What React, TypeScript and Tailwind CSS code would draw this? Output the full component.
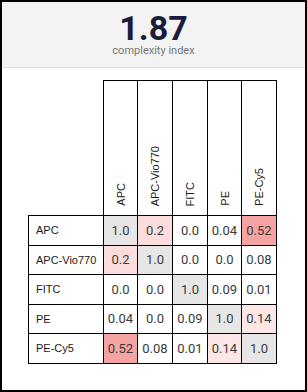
const channels = ["APC", "APC-Vio770", "FITC", "PE", "PE-Cy5"]

const matrix = [
  ["1.0", "0.2", "0.0", "0.04", "0.52"],
  ["0.2", "1.0", "0.0", "0.0", "0.08"],
  ["0.0", "0.0", "1.0", "0.09", "0.01"],
  ["0.04", "0.0", "0.09", "1.0", "0.14"],
  ["0.52", "0.08", "0.01", "0.14", "1.0"],
]

const colWidths = ["w-[34px]", "w-[35px]", "w-[35px]", "w-[34px]", "w-[35px]"]

function cellBg(value: string, diagonal: boolean) {
  if (diagonal) return "bg-[#e6e6e6]"
  const v = parseFloat(value)
  if (v >= 0.5) return "bg-[#f6a3a3]"
  if (v >= 0.2) return "bg-[#fcdcdc]"
  if (v >= 0.1) return "bg-[#fde6e6]"
  return "bg-white"
}

export default function App() {
  return (
    <div className="w-[307px] h-[392px] border-2 border-black bg-white flex flex-col">
      <div className="h-[66px] shrink-0 bg-[#f3f3f3] border-b border-[#dddddd] flex flex-col items-center pt-[12px] font-['Roboto',sans-serif]">
        <div className="text-[34px] leading-[28px] font-bold text-[#1d1b3b]">1.87</div>
        <div className="mt-[3px] text-[11px] leading-[12px] text-[#777777]">complexity index</div>
      </div>
      <div className="pt-[12px] pl-[26px]">
        <table className="table-fixed border-collapse w-[249px]">
          <colgroup>
            <col className="w-[75px]" />
            {colWidths.map((w, i) => (
              <col key={i} className={w} />
            ))}
          </colgroup>
          <thead>
            <tr>
              <th className="p-0"></th>
              {channels.map((ch) => (
                <th key={ch} className="h-[135px] p-0 pb-[9px] align-bottom border border-black font-normal">
                  <div className="flex justify-center">
                    <span className="[writing-mode:vertical-rl] rotate-180 font-['Liberation_Sans',Arial,sans-serif] text-[11px] leading-[12px] text-[#1a1a1a] whitespace-nowrap">
                      {ch}
                    </span>
                  </div>
                </th>
              ))}
            </tr>
          </thead>
          <tbody>
            {matrix.map((row, r) => (
              <tr key={r}>
                <td className="h-[29.6px] p-0 pl-[7px] border border-black font-['Liberation_Sans',Arial,sans-serif] text-[11px] text-[#1a1a1a] whitespace-nowrap">
                  {channels[r]}
                </td>
                {row.map((val, c) => (
                  <td
                    key={c}
                    className={`p-0 text-center border border-black font-['Roboto',sans-serif] text-[13px] text-[#3a3a3a] ${cellBg(val, r === c)}`}
                  >
                    {val}
                  </td>
                ))}
              </tr>
            ))}
          </tbody>
        </table>
      </div>
    </div>
  )
}
